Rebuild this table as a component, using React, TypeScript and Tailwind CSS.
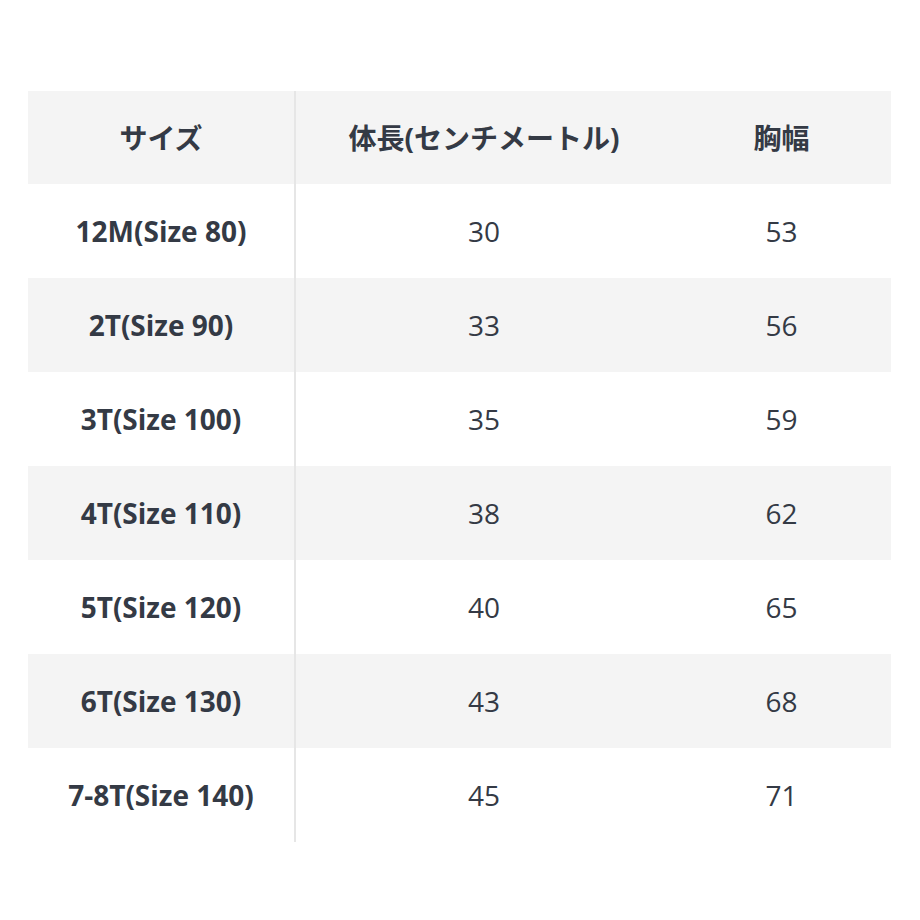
const rows = [
  { size: '12M(Size 80)', length: '30', chest: '53' },
  { size: '2T(Size 90)', length: '33', chest: '56' },
  { size: '3T(Size 100)', length: '35', chest: '59' },
  { size: '4T(Size 110)', length: '38', chest: '62' },
  { size: '5T(Size 120)', length: '40', chest: '65' },
  { size: '6T(Size 130)', length: '43', chest: '68' },
  { size: '7-8T(Size 140)', length: '45', chest: '71' },
];

export default function App() {
  return (
    <div
      className="w-[920px] h-[920px] bg-white pt-[91px] pl-[28px] text-[#343a45]"
      style={{ fontFamily: '"Open Sans", "Noto Sans CJK JP", sans-serif' }}
    >
      <div className="w-[863px]">
        {/* Header */}
        <div className="flex h-[93px] bg-[#f4f4f4] text-[28px] font-bold">
          <div className="w-[268px] flex items-center justify-center border-r-2 border-[#e6e6e6]">
            サイズ
          </div>
          <div className="w-[376px] flex items-center justify-center">
            体長(センチメートル)
          </div>
          <div className="flex-1 flex items-center justify-center">胸幅</div>
        </div>

        {rows.map((r, i) => (
          <div
            key={r.size}
            className={`flex h-[94px] text-[28px] ${i % 2 === 1 ? 'bg-[#f4f4f4]' : 'bg-white'}`}
          >
            <div className="w-[268px] flex items-center justify-center border-r-2 border-[#e6e6e6] font-bold">
              {r.size}
            </div>
            <div className="w-[376px] flex items-center justify-center">{r.length}</div>
            <div className="flex-1 flex items-center justify-center">{r.chest}</div>
          </div>
        ))}
      </div>
    </div>
  );
}
